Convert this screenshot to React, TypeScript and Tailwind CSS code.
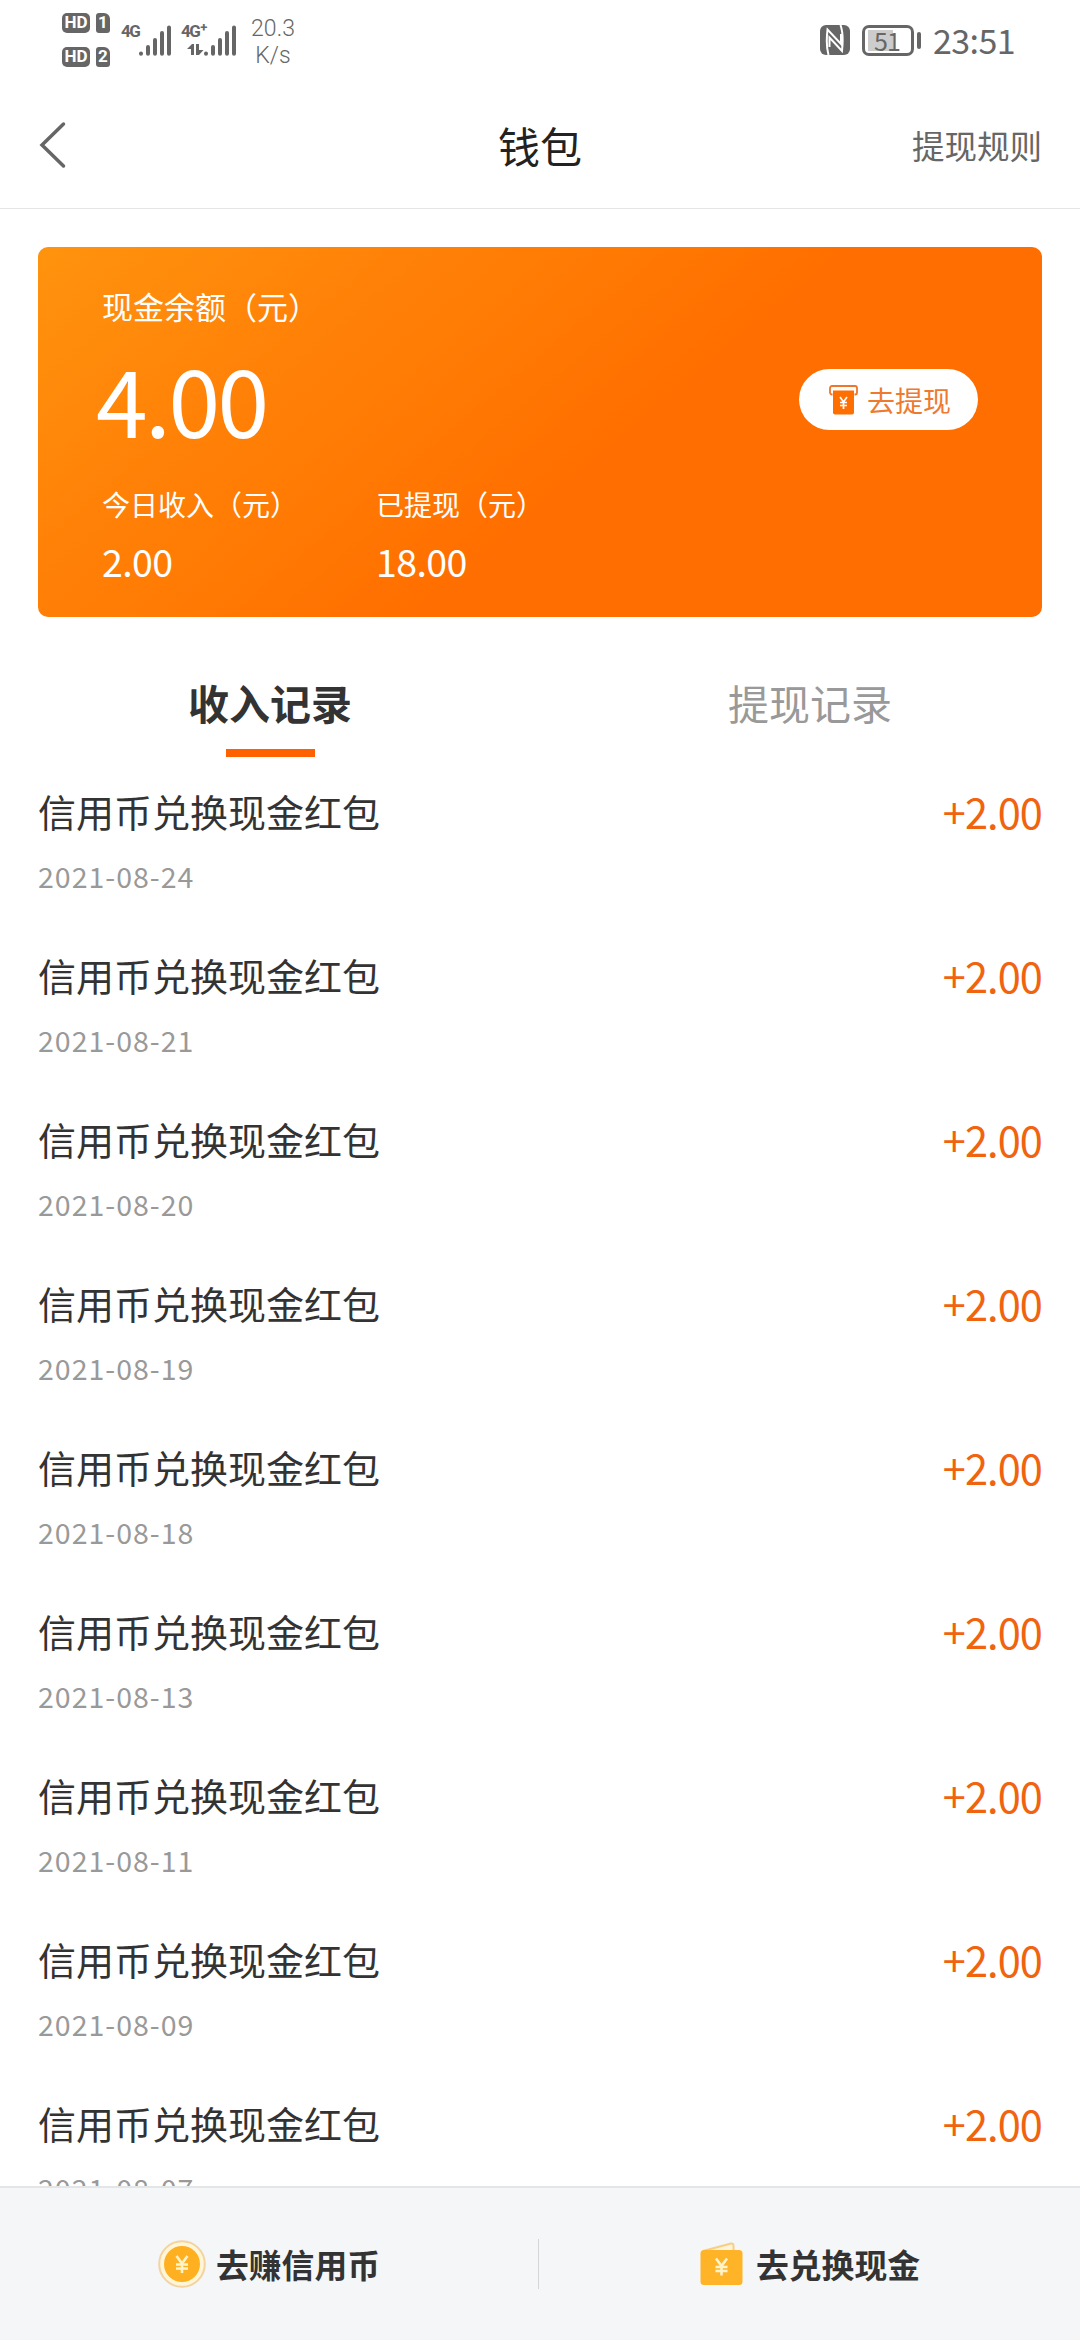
import React from 'react';

interface IncomeRecord {
  id: number;
  title: string;
  date: string;
  amount: string;
}

const DATES = [
  '2021-08-24',
  '2021-08-21',
  '2021-08-20',
  '2021-08-19',
  '2021-08-18',
  '2021-08-13',
  '2021-08-11',
  '2021-08-09',
  '2021-08-07',
];

const RECORDS: IncomeRecord[] = DATES.map((date, id) => ({
  id,
  title: '信用币兑换现金红包',
  date,
  amount: '+2.00',
}));

const SimBadge: React.FC<{ slot: string }> = ({ slot }) => (
  <div className="flex items-center gap-[6px]">
    <span className="flex h-5 w-7 items-center justify-center rounded-[5px] bg-[#666] pb-px font-['Roboto',sans-serif] text-[17px] leading-none font-bold text-white">
      HD
    </span>
    <span className="flex h-5 w-[14px] items-center justify-center rounded-[3px] rounded-tr-[6px] bg-[#666] pb-px font-['Roboto',sans-serif] text-[17px] leading-none font-bold text-white">
      {slot}
    </span>
  </div>
);

const SignalBars: React.FC = () => (
  <svg width="33" height="31" viewBox="0 0 33 31" stroke="#666" strokeWidth="4" strokeLinecap="round">
    <path d="M2 28.4v.4M9 22v6.8M16 15v13.8M23 8v20.8M30 2.5v26.3" />
  </svg>
);

const NfcIcon: React.FC = () => (
  <svg width="30" height="30" viewBox="0 0 30 30" fill="none">
    <rect width="30" height="30" rx="6" fill="#666" />
    <path d="M8.500 30C6.500 23 6.500 13 7.500 4.500L21 19V9" stroke="#fff" strokeWidth="2" />
    <path d="M20.500 0C23 7 23 17 22 26L9.500 12.500V22" stroke="#fff" strokeWidth="2" />
  </svg>
);

const StatusBar: React.FC = () => (
  <div className="flex h-20 items-start pr-[65px] pl-[62px] text-[#666]">
    <div className="flex flex-col gap-[14px] pt-[13px]">
      <SimBadge slot="1" />
      <SimBadge slot="2" />
    </div>
    <div className="ml-[11px] flex pt-[25px]">
      <span className="w-[18px] font-['Roboto',sans-serif] text-[17px] leading-[13px] font-bold tracking-[-1.5px]">4G</span>
      <SignalBars />
    </div>
    <div className="ml-[9px] flex pt-[25px]">
      <div className="flex w-[23px] flex-col items-end">
        <span className="w-[23px] font-['Roboto',sans-serif] text-[17px] leading-[13px] font-bold tracking-[-1.5px] whitespace-nowrap">
          4G<sup className="top-[-5px] ml-px text-[13px]">+</sup>
        </span>
        <svg className="mt-[6px]" width="17" height="11" viewBox="0 0 17 11" fill="#666">
          <path d="M0 5L5 0h2v11H4V5zM9 0h3v6h4.500L12 11H9z" />
        </svg>
      </div>
      <SignalBars />
    </div>
    <div className="ml-[13px] flex w-[46px] flex-col items-center pt-[15px] font-['Roboto',sans-serif] text-[23px] leading-[27px] font-light">
      <span>20.3</span>
      <span>K/s</span>
    </div>
    <div className="ml-auto flex pt-[25px]">
      <NfcIcon />
      <div className="ml-3 flex h-[31px] w-[52px] items-center rounded-[7px] border-3 border-[#666] pl-[3px]">
        <div className="flex h-[21px] w-[25px] items-center bg-[#ccc] pl-[6px] text-[25px] leading-none tracking-[-1px]">
          51
        </div>
      </div>
      <div className="mt-[7px] ml-[3px] h-[17px] w-1 rounded-full bg-[#666]" />
    </div>
    <span className="ml-[12px] pt-[20px] text-[34px] leading-10 tracking-[-0.6px]">23:51</span>
  </div>
);

const Header: React.FC = () => (
  <header className="flex h-[129px] items-center border-b border-[#e5e5e5] px-[38px] pt-[2px]">
    <div className="flex-1">
      <svg width="28" height="48" viewBox="0 0 28 48" fill="none" stroke="#666" strokeWidth="3.500" strokeLinecap="round">
        <path d="M25.500 3L4 24l21.500 21" />
      </svg>
    </div>
    <h1 className="text-[42px] leading-none text-[#222]">钱包</h1>
    <div className="flex-1 text-right text-[32.5px] leading-none text-[#666]">提现规则</div>
  </header>
);

const BalanceCard: React.FC = () => (
  <section className="mx-[38px] mt-[38px] flex h-[370px] items-start justify-between rounded-[10px] bg-linear-[140deg,#ff930e_0%,#ff8007_28%,#ff7803_43%,#ff6e00_57%,#ff6e00_100%] pt-[39px] pr-16 pl-16 text-white">
    <div>
      <div className="text-[31px] leading-10">现金余额（元）</div>
      <div className="mt-[22px] -ml-[6px] text-[93px] leading-[100px] tracking-[-2.5px]">4.00</div>
      <div className="mt-[38px] flex">
        <div className="w-[274px]">
          <div className="text-[28px] leading-9">今日收入（元）</div>
          <div className="mt-[17px] text-[37.5px] leading-[44px] tracking-[-0.6px]">2.00</div>
        </div>
        <div>
          <div className="text-[28px] leading-9">已提现（元）</div>
          <div className="mt-[17px] text-[37.5px] leading-[44px] tracking-[-0.6px]">18.00</div>
        </div>
      </div>
    </div>
    <button className="mt-[83px] flex h-[61px] w-[179px] items-center rounded-full bg-white pl-[30px] text-[28px] leading-none text-[#ee7a30]">
      <svg width="29" height="30" viewBox="0 0 29 30" fill="none">
        <path d="M3.500 9.500H3a2 2 0 0 1-2-2V3a2 2 0 0 1 2-2h23a2 2 0 0 1 2 2v4.500a2 2 0 0 1-2 2h-.5" stroke="#f0752a" strokeWidth="1.800" />
        <path d="M4 5.500h21v22a2 2 0 0 1-2 2H6a2 2 0 0 1-2-2z" fill="#ff6e00" />
        <path d="M11 12l3.500 5 3.500-5M14.500 17v7M11 17.500h7M11 20.500h7" stroke="#fff" strokeWidth="1.700" />
      </svg>
      <span className="ml-[9px]">去提现</span>
    </button>
  </section>
);

const Tabs: React.FC = () => (
  <nav className="mt-[59px] flex text-[41px] leading-[52px]">
    <div className="flex flex-1 flex-col items-center">
      <span className="font-bold text-[#333]">收入记录</span>
      <span className="mt-[21px] h-2 w-[89px] bg-[#ff6000]" />
    </div>
    <div className="flex flex-1 flex-col items-center">
      <span className="text-[#999]">提现记录</span>
    </div>
  </nav>
);

const RecordRow: React.FC<{ record: IncomeRecord }> = ({ record }) => (
  <li className="flex h-[164px] items-start justify-between">
    <div>
      <div className="text-[38px] leading-[50px] text-[#333]">{record.title}</div>
      <div className="mt-5 text-[28.5px] leading-10 tracking-[1px] text-[#999]">{record.date}</div>
    </div>
    <div className="text-[41.5px] leading-[50px] tracking-[-0.9px] text-[#f0640f]">{record.amount}</div>
  </li>
);

const CoinIcon: React.FC = () => (
  <svg width="48" height="48" viewBox="0 0 48 48" fill="none">
    <circle cx="24" cy="24" r="22.800" fill="#fff6d8" stroke="#f3d3a0" strokeWidth="2" />
    <circle cx="24" cy="24" r="18" fill="#ffb020" />
    <path d="M18.500 16l5.500 7.500 5.500-7.500M24 23.500V33M18 24.500h12M18 28.500h12" stroke="#fff3c8" strokeWidth="2.600" />
  </svg>
);

const WalletIcon: React.FC = () => (
  <svg width="43" height="44" viewBox="0 0 43 44" fill="none">
    <path d="M3 9L31 1.500a2 2 0 0 1 2.500 2V9" fill="#fff3d8" stroke="#f8cd85" strokeWidth="2" />
    <rect x="0.500" y="8" width="42" height="35" rx="3.500" fill="#ffb428" />
    <path d="M16 16.500l5.500 7.500 5.500-7.500M21.500 24v9.500M15.500 25h12M15.500 29h12" stroke="#fff3c8" strokeWidth="2.600" />
  </svg>
);

const BottomBar: React.FC = () => (
  <footer className="flex h-[154px] shrink-0 items-center border-t-2 border-[#e4e5e7] bg-[#f5f6f8] text-[32.8px] leading-none font-bold text-[#333]">
    <div className="flex flex-1 items-center pl-[158px]">
      <CoinIcon />
      <span className="ml-[10px]">去赚信用币</span>
    </div>
    <div className="h-[50px] w-px bg-[#d4d5d7]" />
    <div className="flex flex-1 items-center pl-[161px]">
      <WalletIcon />
      <span className="ml-[13px]">去兑换现金</span>
    </div>
  </footer>
);

const App: React.FC = () => (
  <div className="flex h-[2340px] w-[1080px] flex-col overflow-hidden bg-white font-['Noto_Sans_CJK_SC',sans-serif]">
    <StatusBar />
    <Header />
    <BalanceCard />
    <Tabs />
    <ul className="mt-2 min-h-0 flex-1 overflow-hidden px-[38px] pt-[21px]">
      {RECORDS.map((record) => (
        <RecordRow key={record.id} record={record} />
      ))}
    </ul>
    <BottomBar />
  </div>
);

export default App;
